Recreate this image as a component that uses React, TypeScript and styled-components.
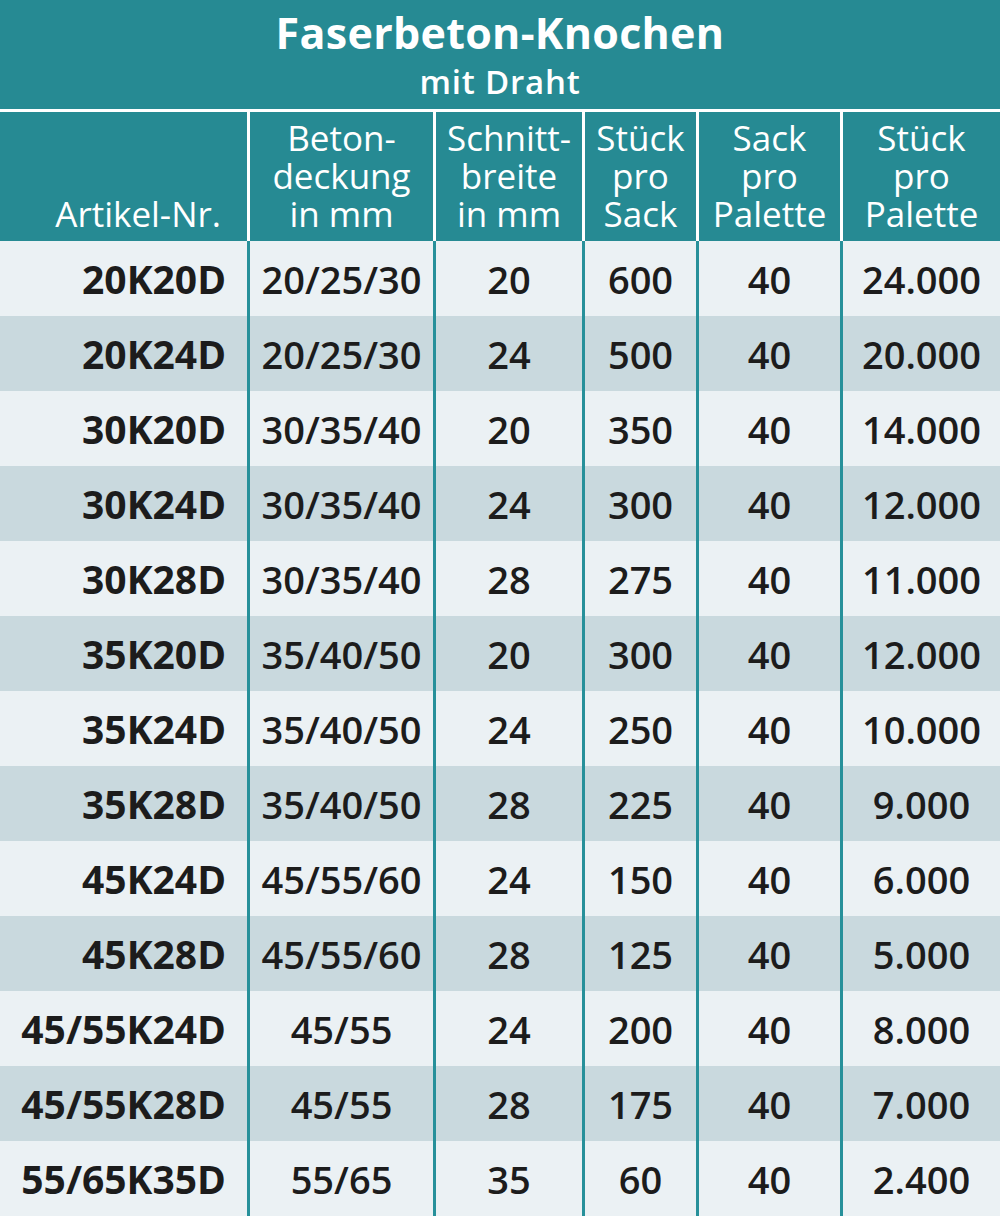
import React from "react";
import styled, { createGlobalStyle } from "styled-components";

const GlobalStyle = createGlobalStyle`
  html, body {
    margin: 0;
    padding: 0;
    background: #ebf1f4;
  }
  body {
    font-family: "Open Sans", "Noto Sans", "Liberation Sans", sans-serif;
  }
`;

const TEAL = "#268a93";
const LINE = "#27909a";
const COLS = "247px 183px 146px 111px 141px 157px";

const Table = styled.div`
  width: 1000px;
  display: flex;
  flex-direction: column;
`;

const TitleBar = styled.div`
  background: ${TEAL};
  color: #ffffff;
  height: 112px;
  box-sizing: border-box;
  padding-top: 8px;
  display: flex;
  flex-direction: column;
  align-items: center;
  border-bottom: 3px solid #ffffff;
`;

const Title = styled.div`
  font-size: 43px;
  font-weight: 700;
  line-height: 50px;
  letter-spacing: 0.3px;
`;

const Subtitle = styled.div`
  font-size: 33px;
  font-weight: 600;
  line-height: 36px;
  margin-top: 6px;
  letter-spacing: 0.8px;
`;

const HeadRow = styled.div`
  display: grid;
  grid-template-columns: ${COLS};
  column-gap: 3px;
  background: #ffffff;
  height: 129px;
`;

const HeadCell = styled.div<{ $right?: boolean }>`
  background: ${TEAL};
  color: #ffffff;
  font-size: 35px;
  font-weight: 500;
  line-height: 38px;
  box-sizing: border-box;
  padding: 7px ${(p) => (p.$right ? "26px" : "0")} 8px 0;
  display: flex;
  flex-direction: column;
  justify-content: flex-end;
  align-items: ${(p) => (p.$right ? "flex-end" : "center")};
  text-align: ${(p) => (p.$right ? "right" : "center")};
`;

const BodyRow = styled.div`
  display: grid;
  grid-template-columns: ${COLS};
  column-gap: 3px;
  background: ${LINE};
  height: 75px;
`;

const Cell = styled.div<{ $dark: boolean; $first?: boolean }>`
  background: ${(p) => (p.$dark ? "#c9d9de" : "#ebf1f4")};
  color: #1c1c1c;
  font-size: ${(p) => (p.$first ? "39px" : "38px")};
  font-weight: ${(p) => (p.$first ? 700 : 600)};
  display: flex;
  align-items: center;
  justify-content: ${(p) => (p.$first ? "flex-end" : "center")};
  padding-right: ${(p) => (p.$first ? "21px" : "0")};
  white-space: nowrap;
`;

const headers: string[][] = [
  ["Artikel-Nr."],
  ["Beton-", "deckung", "in mm"],
  ["Schnitt-", "breite", "in mm"],
  ["Stück", "pro", "Sack"],
  ["Sack", "pro", "Palette"],
  ["Stück", "pro", "Palette"],
];

const rows: string[][] = [
  ["20K20D", "20/25/30", "20", "600", "40", "24.000"],
  ["20K24D", "20/25/30", "24", "500", "40", "20.000"],
  ["30K20D", "30/35/40", "20", "350", "40", "14.000"],
  ["30K24D", "30/35/40", "24", "300", "40", "12.000"],
  ["30K28D", "30/35/40", "28", "275", "40", "11.000"],
  ["35K20D", "35/40/50", "20", "300", "40", "12.000"],
  ["35K24D", "35/40/50", "24", "250", "40", "10.000"],
  ["35K28D", "35/40/50", "28", "225", "40", "9.000"],
  ["45K24D", "45/55/60", "24", "150", "40", "6.000"],
  ["45K28D", "45/55/60", "28", "125", "40", "5.000"],
  ["45/55K24D", "45/55", "24", "200", "40", "8.000"],
  ["45/55K28D", "45/55", "28", "175", "40", "7.000"],
  ["55/65K35D", "55/65", "35", "60", "40", "2.400"],
];

export default function App() {
  return (
    <>
      <GlobalStyle />
      <Table>
        <TitleBar>
          <Title>Faserbeton-Knochen</Title>
          <Subtitle>mit Draht</Subtitle>
        </TitleBar>
        <HeadRow>
          {headers.map((lines, i) => (
            <HeadCell key={i} $right={i === 0}>
              {lines.map((l, j) => (
                <span key={j}>{l}</span>
              ))}
            </HeadCell>
          ))}
        </HeadRow>
        {rows.map((r, i) => (
          <BodyRow key={i}>
            {r.map((v, j) => (
              <Cell key={j} $dark={i % 2 === 1} $first={j === 0}>
                {v}
              </Cell>
            ))}
          </BodyRow>
        ))}
      </Table>
    </>
  );
}
